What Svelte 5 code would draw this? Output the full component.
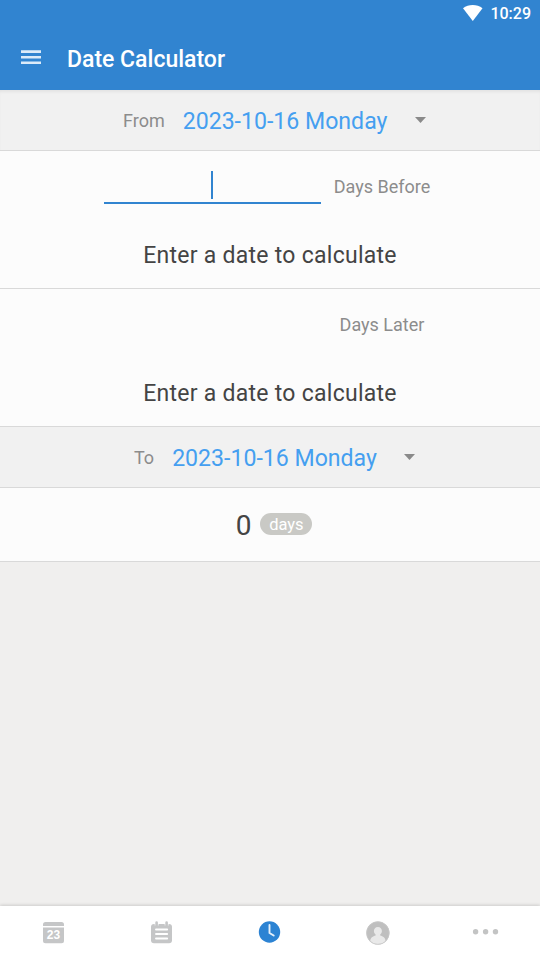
<script>
  const zones = [
    { label: 'Days Before', active: true },
    { label: 'Days Later', active: false }
  ];
  const message = 'Enter a date to calculate';
  const date = '2023-10-16 Monday';
</script>

{#snippet dateRow(label, kind)}
  <div class="date-row {kind}">
    <span class="caption">{label}</span>
    <span class="date">{date}</span>
    <svg class="caret" width="12" height="6" viewBox="0 0 12 6"><path d="M0 0h11L5.500 6z" fill="#8a8a8a" /></svg>
  </div>
{/snippet}

<div class="screen">
  <header>
    <div class="status">
      <svg width="20" height="16" viewBox="0 0 20 16"><path d="M1 3.200C6.500-1.100 15-1.100 20.500 3.200L10.800 16z" fill="#fff" /></svg>
      <span>10:29</span>
    </div>
    <div class="toolbar">
      <svg class="menu" width="20" height="14" viewBox="0 0 20 14">
        <path d="M0 1.600h20M0 7.200h20M0 12.700h20" stroke="#dcebf9" stroke-width="2.600" />
      </svg>
      <h1>Date Calculator</h1>
    </div>
  </header>

  <main>
    {@render dateRow('From', 'from')}
    {#each zones as zone}
      <section>
        <div class="entry">
          <div class="field" class:active={zone.active}>
            {#if zone.active}<i class="cursor"></i>{/if}
          </div>
          <span class="unit">{zone.label}</span>
        </div>
        <p>{message}</p>
      </section>
    {/each}
    {@render dateRow('To', 'to')}
    <div class="result">
      <span class="number">0</span>
      <span class="badge">days</span>
    </div>
  </main>

  <nav>
    <div class="tab">
      <svg width="26" height="26" viewBox="0 0 26 26">
        <path d="M2 6V4.500Q2 2 4.500 2h16Q23 2 23 4.500V6zM2 7.500h21v13.300q0 2.500-2.500 2.500h-16q-2.500 0-2.500-2.500z" fill="#c5c6c7" />
        <text x="12.500" y="19" text-anchor="middle" font-family="Liberation Sans, sans-serif" font-weight="700" font-size="12" fill="#fff">23</text>
      </svg>
    </div>
    <div class="tab">
      <svg width="26" height="26" viewBox="0 0 26 26">
        <rect x="2" y="4" width="21" height="19.300" rx="3" fill="#c5c6c7" />
        <path d="M7.600 1.500v4M17.600 1.500v4" stroke="#fff" stroke-width="3.800" />
        <path d="M7.600 2.600v4M17.600 2.600v4" stroke="#c5c6c7" stroke-width="2.600" stroke-linecap="round" />
        <path d="M7 9.500h11.200M7 14h11.200M7 18.500h11.200" stroke="#fff" stroke-width="1.900" stroke-linecap="round" />
      </svg>
    </div>
    <div class="tab">
      <svg width="26" height="26" viewBox="0 0 26 26">
        <circle cx="12.500" cy="12" r="10.700" fill="#2c83d3" />
        <path d="M12.500 5v8l4.200 2.500" fill="none" stroke="#e4f0fb" stroke-width="1.900" stroke-linecap="round" stroke-linejoin="round" />
      </svg>
    </div>
    <div class="tab">
      <svg width="26" height="26" viewBox="0 0 26 26">
        <circle cx="12.900" cy="13" r="11.500" fill="#bfbfbf" />
        <path d="M12.900 7c-2.500 0-4 1.800-4 4 0 1.500.7 2.800 1.700 3.500v1c-2.700.6-5.200 2.100-5.500 6 4.600 3.800 11 3.800 15.600 0-.3-3.900-2.800-5.400-5.500-6v-1c1-.7 1.700-2 1.700-3.500 0-2.200-1.500-4-4-4z" fill="#e9e9e9" />
        <circle cx="12.900" cy="13" r="11.300" fill="none" stroke="#c8c8c8" stroke-width=".8" />
      </svg>
    </div>
    <div class="tab">
      <svg width="26" height="26" viewBox="0 0 26 26" fill="#c3c4c4">
        <circle cx="2.600" cy="11.800" r="2.700" /><circle cx="12.600" cy="11.800" r="2.700" /><circle cx="22.500" cy="11.800" r="2.700" />
      </svg>
    </div>
  </nav>
</div>

<style>
  .screen {
    width: 540px;
    height: 960px;
    display: flex;
    flex-direction: column;
    background: #f0efee;
    font-family: Roboto, sans-serif;
    overflow: hidden;
    white-space: nowrap;
  }
  svg { display: block; flex: none; overflow: visible; }
  header {
    height: 90px;
    box-sizing: border-box;
    flex: none;
    background: #3184d0;
    color: #fff;
  }
  .status {
    height: 27px;
    display: flex;
    justify-content: flex-end;
    align-items: center;
    padding-right: 9px;
    gap: 8px;
    font-size: 16px;
    font-weight: 500;
    line-height: 27px;
  }
  .status svg { margin-top: -2px; }
  .toolbar {
    height: 63px;
    display: flex;
    align-items: center;
    padding-left: 21px;
    gap: 26px;
  }
  .menu { margin-top: -3px; }
  h1 {
    margin: 3px 0 0;
    font-size: 23px;
    line-height: 30px;
    font-weight: 500;
  }
  main { flex: 1; }
  .date-row {
    height: 60px;
    display: flex;
    align-items: center;
    background: #f1f1f1;
    border-bottom: 1px solid #d9d9d9;
  }
  .from {
    padding-left: 123px;
    box-shadow: inset 0 3px 3px -1px rgba(0, 0, 0, .06);
  }
  .to { padding-left: 134px; }
  .caption, .unit { font-size: 18px; color: #8c8c8c; }
  .date {
    width: 206px;
    margin: 2px 0 0 18px;
    font-size: 23.100px;
    color: #459ff0;
  }
  .caret { margin: 0 0 0 26px; }
  section {
    height: 137px;
    background: #fcfcfc;
    border-bottom: 1px solid #d9d9d9;
    display: flex;
    flex-direction: column;
  }
  .entry {
    height: 71px;
    display: flex;
    align-items: center;
    padding-left: 104px;
    gap: 12.500px;
  }
  .field {
    width: 217px;
    height: 33px;
    margin-top: 2px;
    box-sizing: border-box;
    display: flex;
    justify-content: center;
    border-bottom: 2px solid transparent;
  }
  .active { border-color: #3184d0; }
  .cursor { width: 2px; height: 28px; margin-right: 2px; background: #3184d0; }
  .unit {
    width: 97px;
    text-align: center;
  }
  p {
    margin: 19px 0 0;
    font-size: 23px;
    letter-spacing: .27px;
    line-height: 30px;
    text-align: center;
    color: #444;
  }
  .result {
    height: 74px;
    display: flex;
    align-items: center;
    justify-content: center;
    gap: 9px;
    padding-left: 8px;
    box-sizing: border-box;
    background: #fcfcfc;
    border-bottom: 1px solid #d9d9d9;
    color: #444;
  }
  .number { font-size: 28px; margin-top: 1px; }
  .badge {
    width: 52px;
    height: 22px;
    margin-top: -1px;
    border-radius: 11px;
    background: #c9c9c5;
    color: #fff;
    font-size: 16.500px;
    line-height: 24px;
    text-align: center;
  }
  nav {
    height: 54px;
    flex: none;
    display: flex;
    background: #fff;
    box-shadow: 0 -1px 3px rgba(0, 0, 0, .15);
  }
  .tab {
    flex: 1;
    display: flex;
    justify-content: center;
    padding-top: 14px;
  }
</style>
